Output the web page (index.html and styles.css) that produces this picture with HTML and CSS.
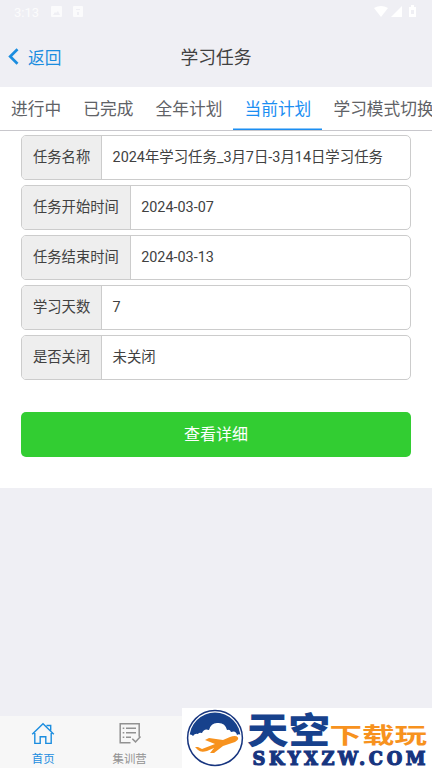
FILE: index.html
```html
<!DOCTYPE html>
<html lang="zh-CN">
<head>
<meta charset="utf-8">
<meta name="viewport" content="width=device-width, initial-scale=1">
<title>学习任务</title>
<link rel="stylesheet" href="styles.css">
</head>
<body>
<div class="app">
  <header class="header">
    <div class="status">
      <span class="clock">3:13</span>
      <svg class="notices" width="36" height="14" viewBox="0 0 36 14" fill="#fff"><path fill-rule="evenodd" d="M2 1h9q1 0 1 1v9q0 1-1 1H2q-1 0-1-1V2q0-1 1-1zm1 9h7L8 6 6 8 5 7z"/><path fill-rule="evenodd" d="M24 1h8q1 0 1 1v9q0 1-1 1h-8q-1 0-1-1V2q0-1 1-1zm2 3v1h4V4zm1 3v3h2V7z"/></svg>
      <svg class="signals" width="44" height="14" viewBox="0 0 44 14" fill="#fff"><path d="M0 3Q7-1 14 3L7 12z"/><path d="M28 1v11H17z"/><path fill-rule="evenodd" d="M35 2h2V0h3v2h2v10h-7zm2 3v4h3V5z"/></svg>
    </div>
    <div class="nav">
      <a class="back"><svg width="11" height="17" viewBox="0 0 11 17" fill="none" stroke="#1b8ddf" stroke-width="2.7"><path d="M9.5 1.2 2.2 8.5l7.3 7.3"/></svg>返回</a>
      <h1>学习任务</h1>
    </div>
  </header>
  <nav class="tabs">
    <a>进行中</a><a>已完成</a><a>全年计划</a><a class="active">当前计划</a><a>学习模式切换</a>
  </nav>
  <main class="panel">
    <div class="field"><span class="label">任务名称</span><span class="value">2024年学习任务_3月7日-3月14日学习任务</span></div>
    <div class="field"><span class="label">任务开始时间</span><span class="value">2024-03-07</span></div>
    <div class="field"><span class="label">任务结束时间</span><span class="value">2024-03-13</span></div>
    <div class="field"><span class="label">学习天数</span><span class="value">7</span></div>
    <div class="field"><span class="label">是否关闭</span><span class="value">未关闭</span></div>
    <button class="detail">查看详细</button>
  </main>
  <footer class="tabbar">
    <a class="item current">
      <svg width="24" height="24" viewBox="0 0 24 24" fill="none" stroke="currentColor" stroke-width="1.4"><path d="M1.2 12.2 12 1.700l10.800 10.500M3.800 11v10.400h5.400v-6.600h5.600v6.600h5.400V11M15.500 3.500h4.200v5"/></svg>
      首页
    </a>
    <a class="item">
      <svg width="24" height="24" viewBox="0 0 24 24" fill="none" stroke="currentColor" stroke-width="1.5"><path d="M12.500 20.800H2.200V1.700h19v13M8 6.300h10M8 10.800h10M8 15.300h5M4.700 6.300h1.600M4.700 10.800h1.600M4.700 15.300h1.600M14.300 16.700l3.200 3.200 5-5.500"/></svg>
      集训营
    </a>
  </footer>
  <svg class="watermark" width="250" height="60" viewBox="182 708 250 60">
    <defs><clipPath id="disc"><circle cx="215" cy="738" r="25.5"/></clipPath></defs>
    <path fill="#fff" d="M182 708h250v60H182z"/>
    <circle cx="215" cy="738" r="27.4" fill="#fff" stroke="#17357f" stroke-width="1.5"/>
    <path clip-path="url(#disc)" fill="#17418c" d="M188 710h54v27q-2-4-5-2-1-5-6-3-1-3-4-2-2-8-10-7-6 0-8 7-5-2-7 3-3-1-4 1-3-1-5 2-2-3-6 0z"/>
    <path fill="#f7921e" d="M238 737.500q1 2-3 4.500l-12 4-9 7-4 0 4-5-7 3q-6 2-9-1l-3-3 3 0 4 2 13-5-10-4 4-2 14 2 7-3q6-2 8 .5z"/>
    <text class="brand blue" transform="translate(247 743.500) scale(1.04 .9)">天空</text>
    <text class="brand orange" transform="translate(329.500 742.500) scale(1.3 .88)">下载玩</text>
    <text class="domain" transform="translate(252.500 765) scale(1 1)" textLength="173" lengthAdjust="spacing">SKYXZW.COM</text>
  </svg>
</div>
</body>
</html>
```
FILE: styles.css
```css
* { box-sizing: border-box; }
body {
  margin: 0;
  font-family: Roboto, "Noto Sans CJK SC", sans-serif;
  color: #414141;
}
.app {
  position: relative;
  display: flex;
  flex-direction: column;
  width: 432px;
  height: 768px;
  overflow: hidden;
  background: #efeff4;
}
.header { height: 87px; flex: none; }
.status {
  display: flex;
  align-items: center;
  height: 26px;
  padding: 0 14px 2px;
  color: #fff;
}
.clock { width: 36px; font-size: 13px; opacity: .8; }
.signals { margin-left: auto; }
.notices { opacity: .8; }
.nav {
  display: grid;
  grid-template-columns: 1fr auto 1fr;
  align-items: center;
  height: 61px;
  padding: 0 9px;
}
.back {
  display: flex;
  align-items: center;
  gap: 9px;
  font-size: 16.7px;
  color: #1b8ddf;
}
.back svg { margin-left: -1px; }
h1 { margin: 0 0 2px; font-size: 17.8px; font-weight: 400; }
.tabs {
  display: flex;
  flex: none;
  height: 44px;
  background: #fff;
  border-bottom: 1px solid #c8c7cc;
  white-space: nowrap;
}
.tabs a {
  flex: none;
  height: 43px;
  padding: 0 11.1px;
  font-size: 16.7px;
  line-height: 46px;
  color: #606266;
}
.tabs .active { color: #1b8ef2; box-shadow: inset 0 -1.500px #1b8ef2; }
.panel {
  display: flex;
  flex-direction: column;
  flex: none;
  gap: 5px;
  height: 357px;
  padding: 4px 21px 0;
  background: #fff;
}
.field {
  display: flex;
  height: 45px;
  font-size: 14.300px;
  line-height: 43px;
  border: 1px solid #ccc;
  border-radius: 5px;
  overflow: hidden;
}
.label {
  padding: 0 11px;
  background: #eee;
  border-right: 1px solid #ccc;
}
.value { padding-left: 10.400px; font-size: 14.400px; line-height: 44px; }
.detail {
  height: 45px;
  margin-top: 27px;
  padding: 0;
  border: 0;
  border-radius: 5px;
  background: #32cd32;
  color: #fff;
  font: 16px/44px Roboto, "Noto Sans CJK SC", sans-serif;
}
.tabbar {
  display: grid;
  grid-template-columns: repeat(5, 1fr);
  height: 52px;
  margin-top: auto;
  background: #f7f7f7;
}
.item {
  display: flex;
  flex-direction: column;
  align-items: center;
  gap: 5px;
  padding-top: 6px;
  font-size: 11.4px;
  line-height: 17px;
  color: #929292;
}
.item.current { color: #1b8ddf; }
.watermark { position: absolute; right: 0; bottom: 0; }
.brand { font-family: "Noto Sans CJK SC", sans-serif; font-weight: 900; }
.blue { font-size: 40px; fill: #17418c; }
.orange { font-size: 25px; font-weight: 700; fill: #f7921e; }
.domain {
  font-family: "DejaVu Serif", serif;
  font-size: 17.800px;
  font-weight: 700;
  fill: #17357f;
  stroke: #17357f;
  stroke-width: 1.2;
}
```
